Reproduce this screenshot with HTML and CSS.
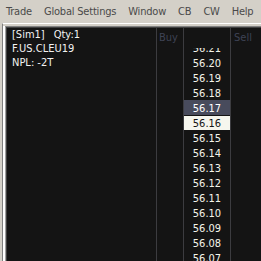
FILE: index.html
```html
<!DOCTYPE html>
<html>
<head>
<meta charset="utf-8">
<link rel="stylesheet" href="styles.css">
</head>
<body>
<div class="menubar">
  <span class="mi">Trade</span>
  <span class="mi">Global Settings</span>
  <span class="mi">Window</span>
  <span class="mi">CB</span>
  <span class="mi">CW</span>
  <span class="mi">Help</span>
</div>
<div class="frame">
  <div class="inner">
    <div class="well">
      <div class="well2">
        <div class="ladder">
          <div class="col info">
            <div class="line">[Sim1]<span class="qty">Qty:1</span></div>
            <div class="line">F.US.CLEU19</div>
            <div class="line">NPL: -2T</div>
          </div>
          <div class="col buy">
            <div class="head">Buy</div>
          </div>
          <div class="col price">
            <div class="head"></div>
            <div class="body">
              <div class="list">
                <div class="row">56.21</div>
                <div class="row">56.20</div>
                <div class="row">56.19</div>
                <div class="row">56.18</div>
                <div class="row bid">56.17</div>
                <div class="row last">56.16</div>
                <div class="row">56.15</div>
                <div class="row">56.14</div>
                <div class="row">56.13</div>
                <div class="row">56.12</div>
                <div class="row">56.11</div>
                <div class="row">56.10</div>
                <div class="row">56.09</div>
                <div class="row">56.08</div>
                <div class="row">56.07</div>
              </div>
            </div>
          </div>
          <div class="col sell">
            <div class="head">Sell</div>
          </div>
        </div>
      </div>
    </div>
  </div>
</div>
</body>
</html>
```
FILE: styles.css
```css
html, body {
  margin: 0;
  padding: 0;
}
body {
  width: 261px;
  height: 261px;
  overflow: hidden;
  background: #d4d0c8;
  font-family: "DejaVu Sans Condensed", "DejaVu Sans", sans-serif;
  font-stretch: semi-condensed;
  font-size: 11px;
}
.menubar {
  display: flex;
  height: 23px;
  line-height: 23px;
  padding-left: 6px;
  gap: 12px;
  color: #4a4a4a;
  white-space: nowrap;
  letter-spacing: -0.2px;
}
.frame {
  margin-left: 2px;
  border-top: 1px solid #ffffff;
  border-left: 1px solid #808080;
  padding-top: 2px;
}
.inner {
  border-left: 2px solid #ffffff;
}
.well {
  border-top: 1px solid #808080;
  border-left: 1px solid #a0a0a0;
}
.well2 {
  border-top: 1px solid #404040;
  border-left: 1px solid #404040;
}
.ladder {
  display: flex;
  height: 233px;
  width: 300px;
  background: #141414;
  color: #f2f2f2;
}
.col {
  display: flex;
  flex-direction: column;
  border-right: 1px solid #3c3c40;
  flex: none;
}
.info {
  width: 144px;
  padding-left: 5px;
  line-height: 14px;
  white-space: nowrap;
}
.qty {
  margin-left: 9px;
}
.buy {
  width: 24px;
  padding-left: 2px;
}
.price {
  width: 46px;
}
.sell {
  width: 30px;
  padding-left: 3px;
}
.head {
  height: 20px;
  line-height: 20px;
  color: #3e4354;
  flex: none;
}
.body {
  flex: 1;
  overflow: hidden;
}
.list {
  margin-top: -8px;
}
.row {
  height: 15px;
  box-sizing: border-box;
  padding-top: 3px;
  line-height: 12px;
  text-align: center;
  color: #f4f4ea;
}
.row.bid {
  background: #484b5c;
  color: #ffffff;
}
.row.last {
  background: #f6f6ee;
  color: #141414;
  box-shadow: inset 0 1px 0 #141414;
}
```
